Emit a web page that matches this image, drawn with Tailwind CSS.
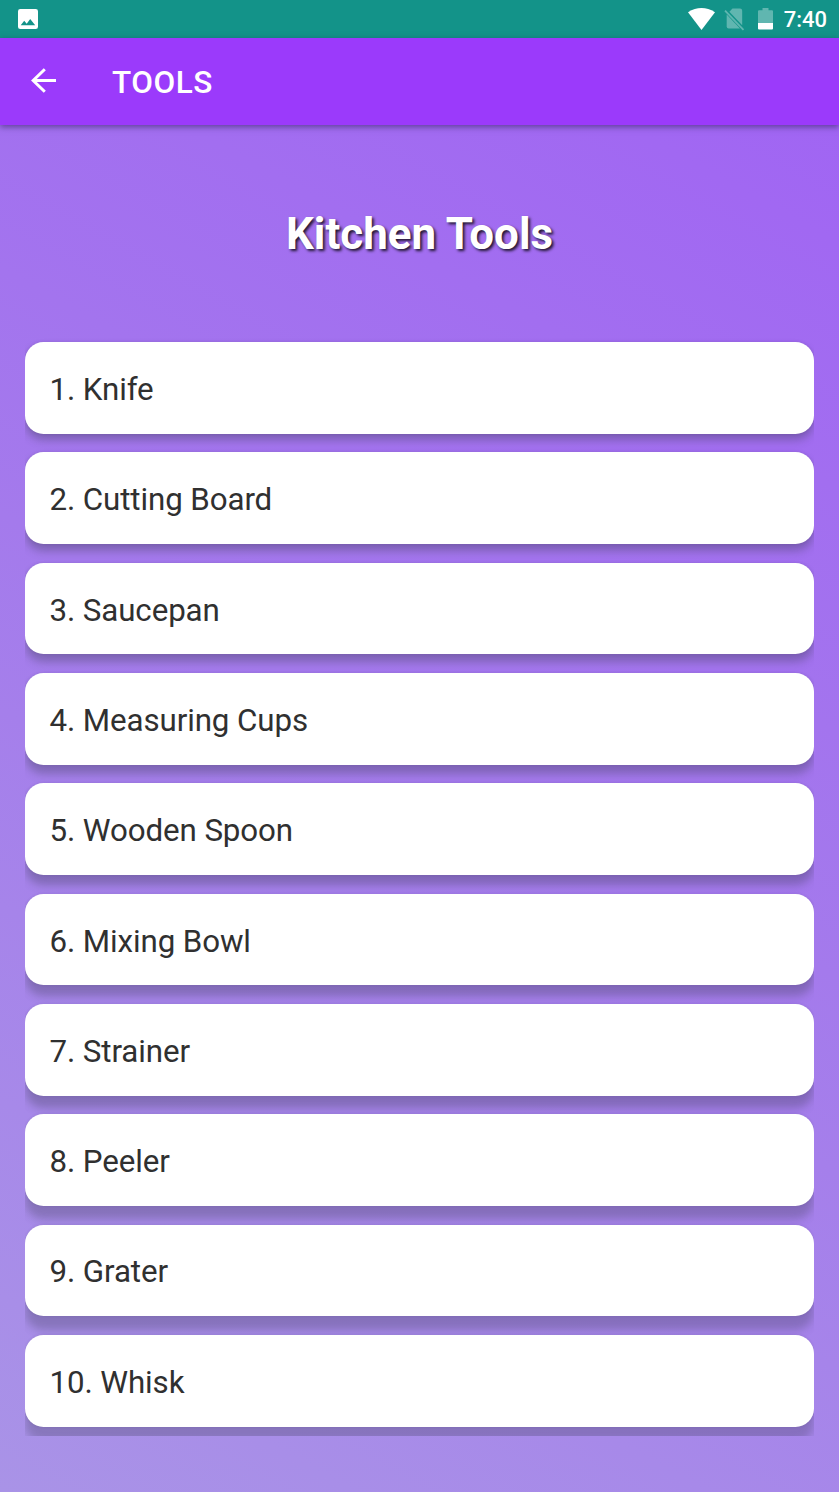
<!DOCTYPE html>
<html lang="en">
<head>
<meta charset="utf-8">
<title>Kitchen Tools</title>
<script src="https://cdn.jsdelivr.net/npm/@tailwindcss/browser@4"></script>
</head>
<body class="font-[Roboto,sans-serif]">
<div class="w-[839px] h-[1492px] overflow-hidden flex flex-col bg-[linear-gradient(29deg,#a993e7_0%,#a47aec_50%,#a062f4_100%)]">
  <div class="h-[37.5px] shrink-0 bg-[#139389] flex items-center justify-between pl-[18px] pr-3 text-white">
    <svg class="size-5" viewBox="0 0 20 20"><rect width="20" height="20" rx="2.3" fill="#fff"/><path d="M2.7 16.2 6.2 11.700l2.5 3 3.5-4.6 5 6.1z" fill="#139389"/></svg>
    <div class="flex items-center">
      <svg class="w-[27px] h-[22px]" viewBox="0 0 27 22"><path d="M0 4.2Q13.500-4 27 4.200L13.500 22z" fill="#fff"/></svg>
      <svg class="w-[21px] h-[23px] ml-[9px] mt-px" viewBox="0 0 21 23"><g fill="#fff" fill-opacity=".33"><path d="M8.500 .5H16q2.200 0 2.200 2.200V17.200L5.400 3.800z"/><path d="M2.700 6.400 16 20.500H4.700q-2 0-2-2z"/></g><path d="M1 2.600 19.500 21.800" stroke="#fff" stroke-opacity=".33" stroke-width="1.800"/></svg>
      <svg class="w-[15px] h-[22px] ml-[13px]" viewBox="0 0 15 22"><path d="M4.500 0h6v2.200H14q1 0 1 1V15H0V3.200q0-1 1-1H4.500z" fill="#fff" fill-opacity=".33"/><path d="M0 15h15v5.500q0 1-1 1H1q-1 0-1-1z" fill="#fff"/></svg>
      <span class="ml-[11px] mt-[3px] text-[22px] leading-6 font-medium">7:40</span>
    </div>
  </div>
  <header class="h-[87px] shrink-0 bg-[#9b3afb] shadow-[0_2px_6px_rgba(30,20,70,0.5)] flex items-center pl-[31px] text-white">
    <svg class="w-[25px] h-[25px] mb-px" viewBox="0 0 25 25" fill="none" stroke="#fff" stroke-width="3"><path d="M25 12.500H2.500M13.800 1.200 2.200 12.500l11.600 11.300"/></svg>
    <h1 class="ml-14 mt-[3px] text-[31.500px] font-medium tracking-[0.5px]">TOOLS</h1>
  </header>
  <h2 class="mt-[83px] h-[52px] text-center text-[43.900px] leading-[52px] font-bold text-white [text-shadow:2px_2px_3px_rgba(0,0,0,0.8)]">Kitchen Tools</h2>
  <ol id="tools" class="mt-[73.3px] mx-[25px] h-[1103.500px] shrink-0 overflow-hidden flex flex-col gap-[18.65px] py-[9.200px] text-[31.300px] tracking-[-0.100px] text-[#303030]"></ol>
</div>
<script>
  const tools = ['Knife', 'Cutting Board', 'Saucepan', 'Measuring Cups', 'Wooden Spoon', 'Mixing Bowl', 'Strainer', 'Peeler', 'Grater', 'Whisk'];
  const list = document.getElementById('tools');
  tools.forEach((name, i) => {
    const item = document.createElement('li');
    item.className = 'h-[91.700px] shrink-0 rounded-[18.500px] bg-white pl-[24.500px] pt-[5px] flex items-center';
    // Elevation shadow drops further the lower the card sits
    item.style.boxShadow = `0 ${6 + i * 0.95}px 8px rgba(60,60,85,${0.38 - i * 0.01}), 0 0 3px rgba(50,40,80,0.15)`;
    item.textContent = `${i + 1}. ${name}`;
    list.append(item);
  });
</script>
</body>
</html>
